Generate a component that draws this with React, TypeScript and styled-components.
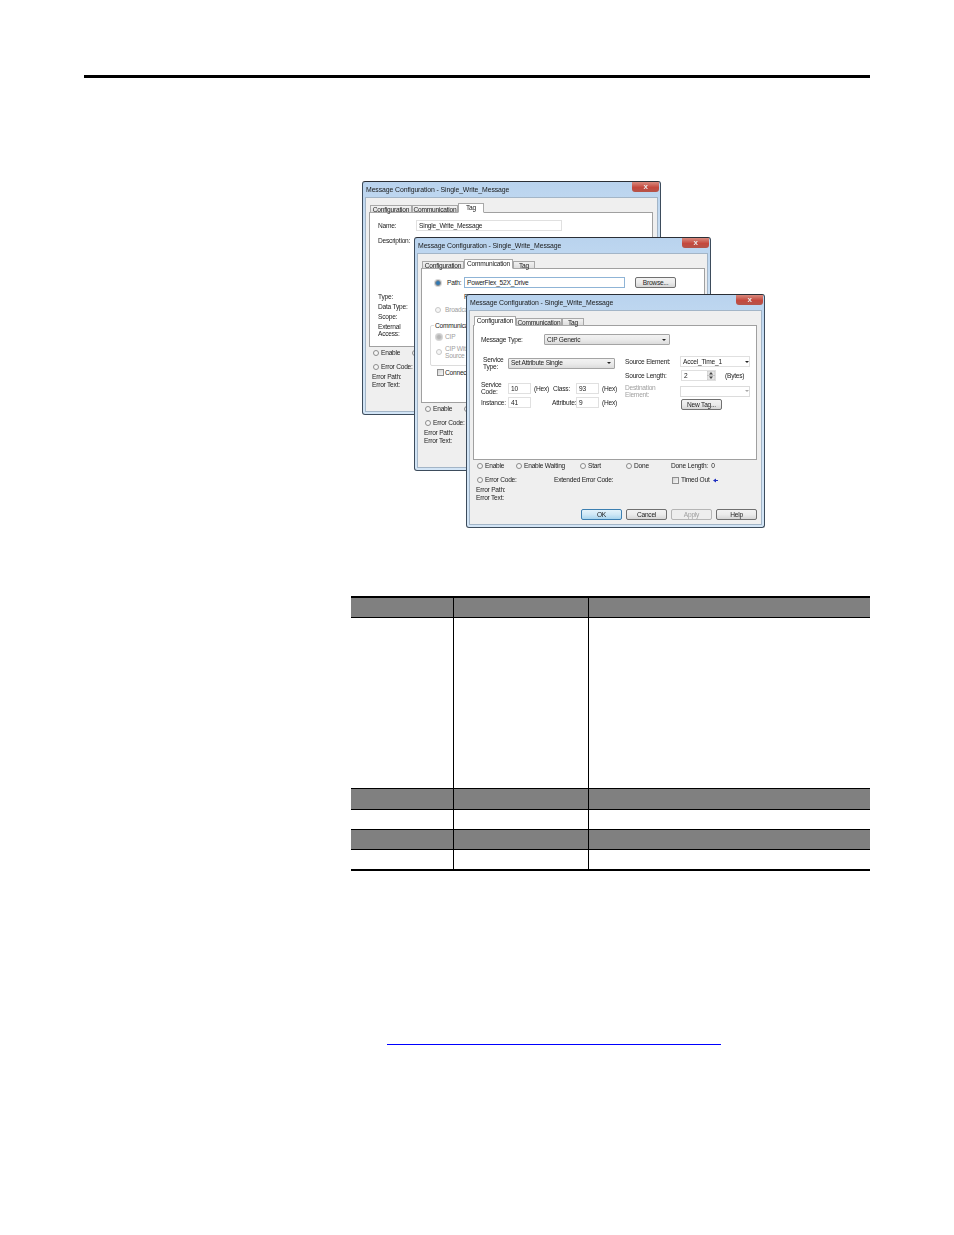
import React from 'react';
import styled, { createGlobalStyle } from 'styled-components';

const GlobalStyle = createGlobalStyle`
  html, body {
    margin: 0;
    padding: 0;
    background: #fff;
    font-family: "Liberation Sans", Arial, sans-serif;
  }
`;

const Page = styled.div`
  width: 954px;
  height: 1235px;
  background: #fff;
  overflow: hidden;
`;

const HeaderRule = styled.div`
  width: 786px;
  height: 3px;
  margin: 75px 0 0 84px;
  background: #000;
`;

const Figure = styled.div`
  position: relative;
  width: 403px;
  height: 347px;
  margin: 103px 0 0 362px;
`;

const Window = styled.div<{ $left: number; $top: number; $width: number }>`
  position: absolute;
  left: ${({ $left }) => $left}px;
  top: ${({ $top }) => $top}px;
  width: ${({ $width }) => $width}px;
  height: 234px;
  box-sizing: border-box;
  display: flex;
  flex-direction: column;
  padding: 0 2px 2px;
  border: 1px solid #3d4c5c;
  border-top-color: #2b2f36;
  border-radius: 3px;
  background: linear-gradient(180deg, #b9d3ee 0%, #cfe3f6 30%, #d3e5f6 100%);
  color: #1c1c1c;
  font-size: 6.6px;
  letter-spacing: -0.22px;
  line-height: 8px;
  filter: blur(0.3px);
`;

const TitleBar = styled.div`
  height: 15px;
  flex: none;
  display: flex;
  align-items: flex-start;
  justify-content: space-between;
  padding-left: 1px;
`;

const TitleText = styled.span`
  margin-top: 4px;
  font-size: 6.9px;
  letter-spacing: -0.1px;
  white-space: nowrap;
  color: #1a1a1a;
`;

const CloseButton = styled.span`
  width: 27px;
  height: 10px;
  margin-right: -1px;
  border-radius: 0 0 3px 3px;
  display: flex;
  align-items: center;
  justify-content: center;
  background: linear-gradient(180deg, #d98a7e 0%, #c4483d 55%, #b4544a 100%);
  color: #e8e8e8;
  font-size: 8px;
  font-weight: bold;
`;

const Frame = styled.div`
  flex: 1;
  min-height: 0;
  display: flex;
  flex-direction: column;
  box-sizing: border-box;
  padding: 5px 0 4px 3px;
  background: #efefef;
  border: 1px solid #a3b5c7;
`;

const TabRow = styled.div`
  height: 10px;
  flex: none;
  display: flex;
  align-items: flex-end;
  margin-left: 1px;
  position: relative;
  z-index: 1;
`;

const Tab = styled.span<{ $width: number; $active?: boolean }>`
  width: ${({ $width }) => $width}px;
  height: ${({ $active }) => ($active ? 10 : 8)}px;
  box-sizing: border-box;
  text-align: center;
  white-space: nowrap;
  line-height: 7px;
  border: 1px solid #a8a8a8;
  border-bottom: ${({ $active }) => ($active ? '1px solid #fff' : '1px solid #a8a8a8')};
  background: ${({ $active }) => ($active ? '#fff' : 'linear-gradient(180deg, #f2f2f2, #dedede)')};
`;

const Panel = styled.div`
  width: 284px;
  height: 135px;
  flex: none;
  box-sizing: border-box;
  margin-top: -1px;
  background: #fff;
  border: 1px solid #a0a0a0;
  position: relative;
`;

const Row = styled.div<{ $top?: number; $left?: number }>`
  display: flex;
  align-items: center;
  margin-top: ${({ $top }) => $top ?? 0}px;
  margin-left: ${({ $left }) => $left ?? 0}px;
  white-space: nowrap;
`;

const Label = styled.span<{ $width?: number; $dim?: boolean; $left?: number }>`
  flex: none;
  width: ${({ $width }) => ($width ? `${$width}px` : 'auto')};
  margin-left: ${({ $left }) => $left ?? 0}px;
  color: ${({ $dim }) => ($dim ? '#a0a0a0' : 'inherit')};
  white-space: pre;
  line-height: 7px;
`;

const Field = styled.span<{ $width: number; $dim?: boolean }>`
  flex: none;
  width: ${({ $width }) => $width}px;
  height: 11px;
  box-sizing: border-box;
  padding-left: 2px;
  line-height: 9px;
  background: #fff;
  border: 1px solid ${({ $dim }) => ($dim ? '#dcdcdc' : '#e0e0e0')};
  display: flex;
  align-items: center;
  justify-content: space-between;
`;

const PathField = styled(Field)`
  border-color: #8fb4d6;
`;

const Combo = styled.span<{ $width: number; $dim?: boolean }>`
  flex: none;
  width: ${({ $width }) => $width}px;
  height: 11px;
  box-sizing: border-box;
  padding: 0 3px 0 2px;
  display: flex;
  align-items: center;
  justify-content: space-between;
  border: 1px solid #a4a4a4;
  border-radius: 1px;
  background: linear-gradient(180deg, #f2f2f2 0%, #ebebeb 50%, #dcdcdc 100%);
`;

const Arrow = styled.i<{ $dim?: boolean }>`
  width: 0;
  height: 0;
  border-left: 2px solid transparent;
  border-right: 2px solid transparent;
  border-top: 2px solid ${({ $dim }) => ($dim ? '#a8a8a8' : '#222')};
`;

const Spin = styled.svg`
  width: 8px;
  height: 9px;
  flex: none;
`;

const Button = styled.span<{ $width?: number; $left?: number; $primary?: boolean; $dim?: boolean }>`
  flex: none;
  width: ${({ $width }) => $width ?? 41}px;
  height: 11px;
  margin-left: ${({ $left }) => $left ?? 0}px;
  box-sizing: border-box;
  display: flex;
  align-items: center;
  justify-content: center;
  border: 1px solid ${({ $primary, $dim }) => ($primary ? '#3c7fb1' : $dim ? '#b5b5b5' : '#707070')};
  border-radius: 2px;
  color: ${({ $dim }) => ($dim ? '#a0a0a0' : 'inherit')};
  background: ${({ $primary, $dim }) =>
    $dim
      ? '#eeeeee'
      : $primary
        ? 'linear-gradient(180deg, #e4f3fb 0%, #cfe8f6 50%, #a9d5ee 100%)'
        : 'linear-gradient(180deg, #f2f2f2 0%, #ebebeb 50%, #d6d6d6 100%)'};
`;

const Radio = styled.i<{ $checked?: boolean; $dim?: boolean }>`
  flex: none;
  width: 6px;
  height: 6px;
  box-sizing: border-box;
  border-radius: 50%;
  border: 1px solid ${({ $dim }) => ($dim ? '#c8c8c8' : '#8c8c8c')};
  background: ${({ $checked, $dim }) =>
    $checked ? ($dim ? '#b5b5b5' : '#2f79b5') : '#f6f6f6'};
  box-shadow: ${({ $checked }) => ($checked ? '0 0 0 1px #d7d7d7' : 'none')};
`;

const CheckBox = styled.i`
  flex: none;
  width: 7px;
  height: 7px;
  box-sizing: border-box;
  border: 1px solid #8e8e8e;
  background: linear-gradient(135deg, #d4d4d4, #f8f8f8);
`;

const StatusItem = styled.span<{ $width?: number }>`
  flex: none;
  width: ${({ $width }) => ($width ? `${$width}px` : 'auto')};
  display: flex;
  align-items: center;
  gap: 2px;
`;

const StatusBlock = styled.div`
  flex: 1;
  margin-left: 4px;
  display: flex;
  flex-direction: column;
`;

const ErrorLine = styled.div<{ $top: number }>`
  margin-top: ${({ $top }) => $top}px;
  margin-left: -1px;
  line-height: 8px;
`;

const ButtonBar = styled.div`
  margin-top: auto;
  width: 284px;
  margin-left: -4px;
  display: flex;
  justify-content: flex-end;
  gap: 4px;
`;

const Pointer = styled.svg`
  width: 5px;
  height: 5px;
  margin-left: 1px;
`;

const FormColumns = styled.div`
  display: flex;
  margin: 11px 0 0 7px;
`;

const LeftColumn = styled.div`
  width: 144px;
  flex: none;
`;

const RightColumn = styled.div`
  flex: none;
`;

const GroupBox = styled.div`
  position: relative;
  width: 268px;
  height: 41px;
  box-sizing: border-box;
  margin: 12px 0 0 8px;
  padding: 7px 0 0 5px;
  border: 1px solid #dcdcdc;
  border-radius: 2px;
`;

const GroupLegend = styled.span`
  position: absolute;
  left: 3px;
  top: -4px;
  padding: 0 1px;
  background: #fff;
  line-height: 8px;
`;

const ConfirmRow = styled(Row)`
  gap: 1px;
`;

const StackList = styled.div`
  margin: 49px 0 0 8px;
  display: flex;
  flex-direction: column;
  gap: 3px;
`;

const Table = styled.div`
  width: 519px;
  margin: 68px 0 0 351px;
  border-top: 2px solid #000;
  border-bottom: 2px solid #000;
`;

const TableRow = styled.div<{ $height: number; $head?: boolean; $last?: boolean }>`
  display: grid;
  grid-template-columns: 103px 135px 1fr;
  height: ${({ $height }) => $height}px;
  box-sizing: border-box;
  background: ${({ $head }) => ($head ? '#808080' : '#fff')};
  border-bottom: ${({ $last }) => ($last ? 'none' : '1px solid #000')};
`;

const TableCell = styled.div<{ $rule?: boolean }>`
  border-right: ${({ $rule }) => ($rule ? '1px solid #000' : 'none')};
`;

const LinkRule = styled.a`
  display: block;
  width: 334px;
  height: 1px;
  margin: 173px 0 0 387px;
  background: #0000ff;
`;

const TAB_DEFS = [
  { name: 'Configuration', width: 42, activeWidth: 42 },
  { name: 'Communication', width: 46, activeWidth: 49 },
  { name: 'Tag', width: 22, activeWidth: 26 },
];

type DialogProps = {
  left: number;
  top: number;
  width: number;
  active: string;
  children: React.ReactNode;
};

const Dialog = ({ left, top, width, active, children }: DialogProps) => (
  <Window $left={left} $top={top} $width={width}>
    <TitleBar>
      <TitleText>Message Configuration - Single_Write_Message</TitleText>
      <CloseButton>x</CloseButton>
    </TitleBar>
    <Frame>
      <TabRow>
        {TAB_DEFS.map((tab) => (
          <Tab
            key={tab.name}
            $width={tab.name === active ? tab.activeWidth : tab.width}
            $active={tab.name === active}
          >
            {tab.name}
          </Tab>
        ))}
      </TabRow>
      <Panel>{children}</Panel>
      <StatusBlock>
        <Row $top={2}>
          <StatusItem $width={39}><Radio />Enable</StatusItem>
          <StatusItem $width={64}><Radio />Enable Waiting</StatusItem>
          <StatusItem $width={46}><Radio />Start</StatusItem>
          <StatusItem $width={45}><Radio />Done</StatusItem>
          <StatusItem>Done Length:&nbsp; 0</StatusItem>
        </Row>
        <Row $top={6}>
          <StatusItem $width={77}><Radio />Error Code:</StatusItem>
          <StatusItem $width={118}>Extended Error Code:</StatusItem>
          <StatusItem>
            <CheckBox />Timed Out
            <Pointer viewBox="0 0 5 5">
              <path d="M0 2.5 L3 0.5 V2 H5 V3 H3 V4.5 Z" fill="#1f2fc0" />
            </Pointer>
          </StatusItem>
        </Row>
        <ErrorLine $top={2}>Error Path:</ErrorLine>
        <ErrorLine $top={0}>Error Text:</ErrorLine>
        <ButtonBar>
          <Button $primary>OK</Button>
          <Button>Cancel</Button>
          <Button $dim>Apply</Button>
          <Button>Help</Button>
        </ButtonBar>
      </StatusBlock>
    </Frame>
  </Window>
);

const TagPanel = () => (
  <>
    <Row $top={7} $left={8}>
      <Label $width={38}>Name:</Label>
      <Field $width={146}>Single_Write_Message</Field>
    </Row>
    <Row $top={6} $left={8}>
      <Label>Description:</Label>
    </Row>
    <StackList>
      <Label>Type:</Label>
      <Label>Data Type:</Label>
      <Label>Scope:</Label>
      <Label>{'External\nAccess:'}</Label>
    </StackList>
  </>
);

const CommunicationPanel = () => (
  <>
    <Row $top={8} $left={13}>
      <Radio $checked />
      <Label $left={6} $width={17}>Path:</Label>
      <PathField $width={161}>PowerFlex_52X_Drive</PathField>
      <Button $left={10}>Browse...</Button>
    </Row>
    <Row $top={5} $left={42}>
      <Label>PowerFlex_52X_Drive</Label>
    </Row>
    <Row $top={6} $left={13}>
      <Radio $dim />
      <Label $left={4} $dim>Broadcast:</Label>
    </Row>
    <GroupBox>
      <GroupLegend>Communication Method</GroupLegend>
      <Row>
        <Radio $checked $dim />
        <Label $left={3} $dim>CIP</Label>
      </Row>
      <Row $top={5}>
        <Radio $dim />
        <Label $left={3} $dim>{'CIP With\nSource ID'}</Label>
      </Row>
    </GroupBox>
    <ConfirmRow $top={3} $left={15}>
      <CheckBox />
      <Label>Connected</Label>
    </ConfirmRow>
  </>
);

const ConfigurationPanel = () => (
  <>
    <Row $top={8} $left={7}>
      <Label $width={63}>Message Type:</Label>
      <Combo $width={126}>CIP Generic<Arrow /></Combo>
    </Row>
    <FormColumns>
      <LeftColumn>
        <Row>
          <Label $width={25} $left={2}>{'Service\nType:'}</Label>
          <Combo $width={107}>Set Attribute Single<Arrow /></Combo>
        </Row>
        <Row $top={11}>
          <Label $width={27}>{'Service\nCode:'}</Label>
          <Field $width={23}>10</Field>
          <Label $width={19} $left={3}>(Hex)</Label>
          <Label $width={23}>Class:</Label>
          <Field $width={23}>93</Field>
          <Label $left={3}>(Hex)</Label>
        </Row>
        <Row $top={2}>
          <Label $width={27}>Instance:</Label>
          <Field $width={23}>41</Field>
          <Label $width={24} $left={21}>Attribute:</Label>
          <Field $width={23}>9</Field>
          <Label $left={3}>(Hex)</Label>
        </Row>
      </LeftColumn>
      <RightColumn>
        <Row>
          <Label $width={55}>Source Element:</Label>
          <Field $width={70}>Accel_Time_1<Arrow /></Field>
        </Row>
        <Row $top={3}>
          <Label $width={56}>Source Length:</Label>
          <Field $width={35}>
            2
            <Spin viewBox="0 0 8 9">
              <rect x="0" y="0" width="8" height="4.5" fill="#e6e6e6" stroke="#b0b0b0" strokeWidth="0.5" />
              <rect x="0" y="4.5" width="8" height="4.5" fill="#e6e6e6" stroke="#b0b0b0" strokeWidth="0.5" />
              <path d="M4 1 L6 3.5 H2 Z M4 8 L6 5.5 H2 Z" fill="#444" />
            </Spin>
          </Field>
          <Label $left={9}>(Bytes)</Label>
        </Row>
        <Row $top={3}>
          <Label $width={55} $dim>{'Destination\nElement:'}</Label>
          <Field $width={70} $dim>&nbsp;<Arrow $dim /></Field>
        </Row>
        <Row $top={1} $left={56}>
          <Button>New Tag...</Button>
        </Row>
      </RightColumn>
    </FormColumns>
  </>
);

const ROWS = [
  { height: 20, head: true },
  { height: 171 },
  { height: 21, head: true },
  { height: 20 },
  { height: 20, head: true },
  { height: 19, last: true },
];

const App = () => (
  <Page>
    <GlobalStyle />
    <HeaderRule />
    <Figure>
      <Dialog left={0} top={0} width={299} active="Tag">
        <TagPanel />
      </Dialog>
      <Dialog left={52} top={56} width={297} active="Communication">
        <CommunicationPanel />
      </Dialog>
      <Dialog left={104} top={113} width={299} active="Configuration">
        <ConfigurationPanel />
      </Dialog>
    </Figure>
    <Table>
      {ROWS.map((row, i) => (
        <TableRow key={i} $height={row.height} $head={row.head} $last={row.last}>
          <TableCell $rule />
          <TableCell $rule />
          <TableCell />
        </TableRow>
      ))}
    </Table>
    <LinkRule />
  </Page>
);

export default App;
